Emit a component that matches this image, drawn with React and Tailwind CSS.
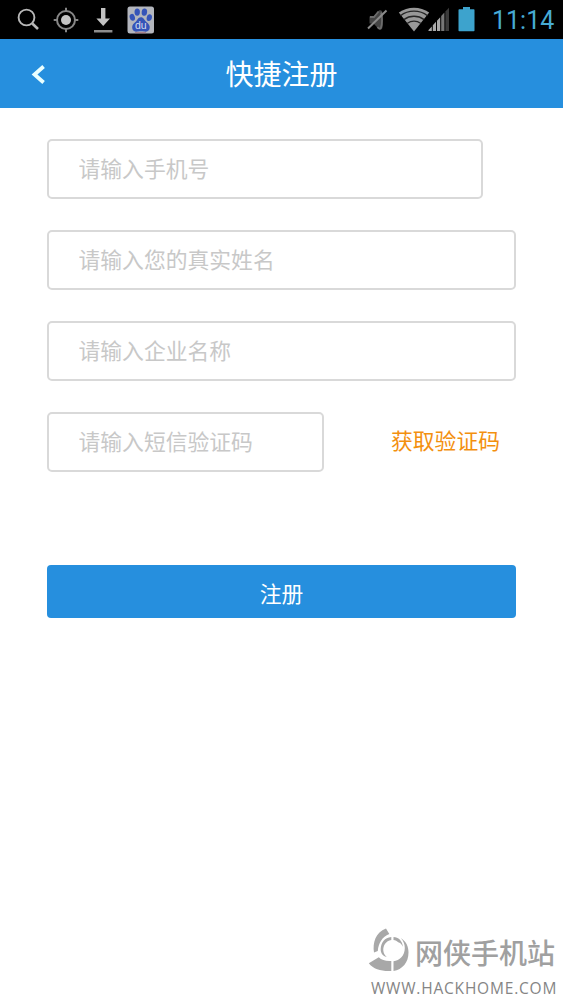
function SearchIcon() {
  return (
    <svg className="h-6 w-6" viewBox="0 0 24 24" fill="none" stroke="#b8b8b8">
      <circle cx="9.500" cy="9.500" r="7.900" strokeWidth="1.900" />
      <path d="M15.300 15.500 21 21" strokeWidth="2.600" />
    </svg>
  );
}

function TargetIcon() {
  return (
    <svg className="h-[26px] w-[26px]" viewBox="0 0 26 26" fill="none" stroke="#868686" strokeWidth="2">
      <circle cx="13" cy="13" r="9" />
      <path d="M13 .7v4M13 21.3v4M.7 13h4M21.3 13h4" />
      <circle cx="13" cy="13" r="5" fill="#c4c4c4" stroke="none" />
    </svg>
  );
}

function DownloadIcon() {
  return (
    <svg className="h-[26px] w-5" viewBox="0 0 20 26">
      <path d="M8 1h4.400v10.500H17L10.200 19 3.400 11.500H8z" fill="#c2c2c2" />
      <path d="M1 23h18.400v2.500H1z" fill="#8d8d8d" />
    </svg>
  );
}

function PawIcon() {
  return (
    <svg className="h-[28px] w-[28px]" viewBox="0 0 28 28">
      <rect x=".5" y=".5" width="26.500" height="27" rx="2.500" fill="#b3b6bd" />
      <g fill="#3554b8">
        <ellipse cx="10.200" cy="6.100" rx="2.700" ry="3.700" />
        <ellipse cx="17.400" cy="6.100" rx="2.700" ry="3.700" transform="rotate(8 17.4 6.1)" />
        <ellipse cx="5.300" cy="11.300" rx="2.600" ry="3.500" transform="rotate(-15 5.3 11.3)" />
        <ellipse cx="22.300" cy="11.700" rx="2.600" ry="3.400" transform="rotate(12 22.3 11.7)" />
        <path d="M13.800 11.200c3 0 3.500 2.800 5.600 4.700 2.100 1.800 3.700 3.200 3.300 6-.4 3-2.800 4.100-5.400 3.700-2.300-.4-4.200-.4-6.400 0-3 .5-5.300-.7-5.700-3.700-.3-2.700 1.300-4.100 3.200-5.800 2-1.800 2.600-4.900 5.400-4.900z" />
      </g>
      <path d="M8 26.700h11" stroke="#a87980" />
      <text x="13.800" y="22.800" textAnchor="middle" fill="#d6dced" fontFamily="Liberation Sans, sans-serif" fontSize="10.500">du</text>
    </svg>
  );
}

function MuteIcon() {
  return (
    <svg className="h-6 w-[22px]" viewBox="0 0 22 24">
      <path d="M2.500 8.500h4L12 2.500c2-1 3.500.5 3.500 2.500v14c-.3 3-2.400 3.500-4 1.700L6.500 15.500h-4z" fill="#454545" />
      <path d="M14 4.500c1.400 3 1.400 12 0 15-1 2-2.500 1-3.500-.5M3 9h4l4.500-5.500" fill="none" stroke="#6c6c6c" strokeWidth="1.800" />
      <path d="m1 20.500 18.500-18" stroke="#8a8a8a" strokeWidth="2" />
    </svg>
  );
}

function WifiIcon() {
  return (
    <svg className="h-[25px] w-8" viewBox="0 0 32 25">
      <path d="M16 24.500 .8 5.500c9-6.400 21.400-6.400 30.400 0z" fill="#989898" />
      <g fill="none" stroke="#252525" strokeWidth="1.300">
        <path d="M2.500 8.700c7.800-6 19.200-6 27 0" />
        <path d="M5.800 12.600c6.200-4.500 14.200-4.500 20.400 0" />
        <path d="M9 16.500c4.500-3 9.500-3 14 0" />
      </g>
    </svg>
  );
}

function SignalIcon() {
  return (
    <svg className="h-[25px] w-[22px]" viewBox="0 0 22 25">
      <path d="M.5 24h3.300v-4.500L.5 23zM4.800 24H8v-9.200l-3.200 3.500zM9 24h3.200V10.200L9 13.700z" fill="#aaa" />
      <path d="M13.200 24h3.200V5.600l-3.200 3.500z" fill="#777" />
      <path d="M17.400 24H21V.8l-3.600 3.700z" fill="#3a3a3a" />
    </svg>
  );
}

function BatteryIcon() {
  return (
    <svg className="h-[25px] w-[17px]" viewBox="0 0 17 25">
      <path d="M5 0h7v2.200h3.700q.8 0 .8.800v20.500q0 .8-.8.800H1.300q-.8 0-.8-.8V3q0-.8.8-.8H5z" fill="#3da3cd" />
    </svg>
  );
}

function StatusBar() {
  return (
    <div className="flex h-[39px] items-center bg-black pr-[9px] pl-[17px]">
      <SearchIcon />
      <div className="ml-3 flex"><TargetIcon /></div>
      <div className="ml-[14px] flex"><DownloadIcon /></div>
      <div className="ml-[14px] flex"><PawIcon /></div>
      <div className="ml-auto flex items-center">
        <MuteIcon />
        <div className="ml-[9px] flex"><WifiIcon /></div>
        <div className="-ml-[2px] flex"><SignalIcon /></div>
        <div className="ml-2 flex"><BatteryIcon /></div>
        <span className="ml-[17px] w-[62px] pt-[2px] font-['Roboto',sans-serif] text-[25px] leading-none whitespace-nowrap text-[#47abd4]">11:14</span>
      </div>
    </div>
  );
}

function Header() {
  return (
    <header className="grid h-[69px] grid-cols-[60px_1fr_60px] items-center bg-[#268fde] text-white">
      <button type="button" aria-label="返回" className="flex pl-[30px]">
        <svg className="h-5 w-4" viewBox="0 0 16 20" fill="none" stroke="#eaffff" strokeWidth="3.800">
          <path d="M13.600 2.500 4.500 10.500l9.100 8" />
        </svg>
      </button>
      <h1 className="pb-[2px] text-center text-[28px] leading-none">快捷注册</h1>
    </header>
  );
}

function Field({ placeholder, className }) {
  return (
    <input
      placeholder={placeholder}
      className={`h-[60px] rounded-[5px] border-2 border-[#d9d9d9] bg-white px-[29.500px] pb-[3px] text-[21.800px] placeholder:text-[#c8c8c8] placeholder:opacity-100 ${className}`}
    />
  );
}

function Watermark() {
  return (
    <div className="mt-auto ml-auto flex w-[195px] flex-col pb-[3px]">
      <div className="flex h-[45px] items-start">
        <svg className="h-[45px] w-[42px] shrink-0" viewBox="0 0 42 45" fill="#a8a8a8">
          <path d="M18 .5 21.300 6C14 9 10.500 15 9.800 23L6 24.500C4.500 15 7.500 4 18 .5z" />
          <path d="M.8 35.300 10.800 29.300c3 3 7.500 4.200 12.500 3.700v10C14 43.500 5.500 41.500.8 35.300z" />
          <path d="M25.500 43V33.300c6-.8 11.300-5.500 11.300-13.300 0-3.800-1.300-7-4-10 5.500 3.500 7.700 8.500 7.700 14.500 0 10-6 17-15 18.500z" />
          <path d="M23.300 9v3c-5.500 1-8.300 5.500-8 10.500.2 2.500 1.300 4.500 3.400 6.500-4-1-6.200-4-6-8 .3-6.500 4-11.500 10.600-12zM25.500 9c5 .2 8.500 3.500 9.500 9.700-1.500-2.700-3-4.200-4.800-4.500-1.200-1.200-2.700-2-4.700-2.200z" />
        </svg>
        <span className="ml-[5px] pt-[10px] text-[28px] leading-[28px] font-medium whitespace-nowrap text-[#a0a0a0]">网侠手机站</span>
      </div>
      <span className="mt-[4px] ml-[3px] font-['Open_Sans',sans-serif] text-[15.500px] leading-[22px] font-normal tracking-[0.800px] whitespace-nowrap text-[#858585]">WWW.HACKHOME.COM</span>
    </div>
  );
}

export default function App() {
  return (
    <div className="flex h-[1002px] w-[563px] flex-col overflow-hidden bg-white font-['Noto_Sans_CJK_SC',sans-serif]">
      <StatusBar />
      <Header />
      <form className="flex flex-col gap-[31px] px-[47px] pt-[31px]">
        <Field placeholder="请输入手机号" className="w-[436px]" />
        <Field placeholder="请输入您的真实姓名" className="w-full" />
        <Field placeholder="请输入企业名称" className="w-full" />
        <div className="flex items-center">
          <Field placeholder="请输入短信验证码" className="w-[277px]" />
          <button type="button" className="ml-[67px] pb-[5px] text-[21.800px] leading-none whitespace-nowrap text-[#f3900f]">获取验证码</button>
        </div>
        <button type="button" className="mt-[62px] h-[53px] rounded-[4px] bg-[#268fde] pt-[2px] text-[21.800px] leading-none text-white">注册</button>
      </form>
      <Watermark />
    </div>
  );
}
